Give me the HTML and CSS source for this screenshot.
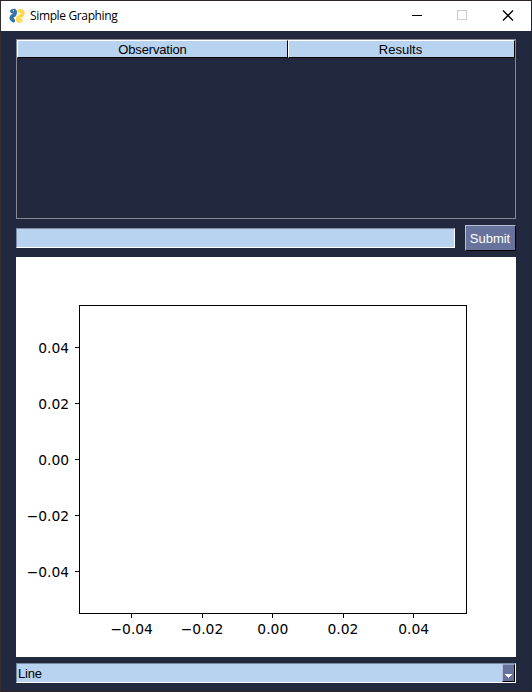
FILE: index.html
```html
<!DOCTYPE html>
<html lang="en">
<head>
<meta charset="utf-8">
<title>Simple Graphing</title>
<link rel="stylesheet" href="styles.css">
</head>
<body>
<div class="window">
  <header class="titlebar">
    <svg class="logo" width="16" height="16" viewBox="0 0 16 16">
      <g fill="none" stroke-width="3.800" stroke-linecap="round" stroke-linejoin="round">
        <path d="M3 3.200Q6.300 1.500 6.100 4.300Q6 6.800 4 7.700Q2 8.900 2.400 10.600L4.200 12.600" stroke="#3673a5"/>
        <path d="M10.300 3Q13.500 2 13.700 5Q13.800 7.400 11.200 8.300Q8.600 9.200 8.900 12Q9.600 13.900 12 12.400" stroke="#ffda4b"/>
      </g>
      <circle cx="4.500" cy="2.700" r=".6" fill="#fff"/>
      <circle cx="11.300" cy="13" r=".6" fill="#fff"/>
    </svg>
    <h1 class="title">Simple Graphing</h1>
    <svg class="controls" width="120" height="30" viewBox="0 0 120 30" shape-rendering="crispEdges">
      <path d="M1 14.500h10" stroke="#000"/>
      <rect x="46.500" y="9.500" width="9" height="9" fill="none" stroke="#ccc"/>
      <path d="M92 9.500l10 10M102 9.500l-10 10" stroke="#000" stroke-width="1.300" shape-rendering="auto"/>
    </svg>
  </header>
  <main class="content">
    <div class="table">
      <div class="head observation">Observation</div>
      <div class="head">Results</div>
    </div>
    <div class="entry-row">
      <input class="entry" type="text" aria-label="Observation">
      <button class="submit">Submit</button>
    </div>
    <svg class="figure" width="500" height="400" viewBox="16 257 500 400">
      <g fill="none" stroke="#000" shape-rendering="crispEdges">
        <rect x="79.500" y="305.500" width="387" height="308"/>
        <path d="M75 347.500h4M75 403.500h4M75 459.500h4M75 515.500h4M75 571.500h4"/>
        <path d="M131.500 614v4M202.500 614v4M272.500 614v4M343.500 614v4M413.500 614v4"/>
      </g>
      <g class="tick" text-anchor="end">
        <text x="69.200" y="353">0.04</text>
        <text x="69.200" y="409">0.02</text>
        <text x="69.200" y="465">0.00</text>
        <text x="69.200" y="521">−0.02</text>
        <text x="69.200" y="577">−0.04</text>
      </g>
      <g class="tick" text-anchor="middle">
        <text x="131.700" y="634">−0.04</text>
        <text x="202" y="634">−0.02</text>
        <text x="272.800" y="634">0.00</text>
        <text x="343" y="634">0.02</text>
        <text x="413.600" y="634">0.04</text>
      </g>
    </svg>
    <div class="combo">
      <span class="value">Line</span>
      <span class="arrow"><svg width="7" height="4" viewBox="0 0 7 4" shape-rendering="crispEdges"><path d="M0 0h7v1H6v1H5v1H4v1H3V3H2V2H1V1H0z" fill="#fff"/></svg></span>
    </div>
  </main>
</div>
</body>
</html>
```
FILE: styles.css
```css
* { box-sizing: border-box; }
body {
  margin: 0;
  width: 532px;
  height: 692px;
  overflow: hidden;
  font-family: "Liberation Sans", Arial, sans-serif;
  font-size: 13px;
}
.window {
  height: 692px;
  border: 1px solid #2b2525;
  border-left-color: #35302f;
  border-right-color: #1b2436;
  background: #22283d;
}
.titlebar {
  display: flex;
  align-items: center;
  height: 30px;
  padding-left: 8px;
  background: #fff;
}
.logo { flex: none; }
.title {
  margin: 0 0 0 5px;
  font: 400 12px/16px "Open Sans", "Noto Sans", sans-serif;
  letter-spacing: -0.36px;
  color: #000;
}
.controls { margin-left: auto; }
.content {
  display: flex;
  flex-direction: column;
  padding: 8px 15px;
}
.table {
  display: flex;
  align-items: flex-start;
  height: 180px;
  border: 1px solid #858894;
}
.head {
  flex: 1;
  height: 18px;
  border: 1px solid #fff;
  border-right-color: #000;
  border-bottom-color: #000;
  background: #b7d3f0;
  color: #000;
  line-height: 18px;
  text-align: center;
}
.head:last-child { padding-right: 2px; }
.observation {
  flex: 0 0 271px;
  letter-spacing: -0.16px;
}
.entry-row {
  display: flex;
  align-items: center;
  gap: 10px;
  height: 26px;
  margin-top: 6px;
}
.entry {
  flex: 1;
  min-width: 0;
  height: 20px;
  padding: 0;
  border: 1px solid #fff;
  border-top-color: #7b8ba4;
  border-left-color: #7b8ba4;
  border-radius: 0;
  outline: 0;
  background: #b7d3f0;
}
.submit {
  width: 51px;
  height: 26px;
  padding: 1px 1px 0 0;
  border: 1px solid #000;
  border-top-color: #b8bdd9;
  border-left-color: #b8bdd9;
  background: #68739d;
  color: #fff;
  font: inherit;
}
.figure {
  display: block;
  margin-top: 6px;
  background: #fff;
}
.tick {
  font-family: "DejaVu Sans", sans-serif;
  font-size: 13.890px;
  fill: #000;
}
.combo {
  display: flex;
  justify-content: space-between;
  height: 20px;
  margin-top: 6px;
  border: 1px solid #fff;
  border-top-color: #7b8ba4;
  border-left-color: #7b8ba4;
  background: #b7d3f0;
}
.value {
  padding-left: 1px;
  line-height: 20px;
  letter-spacing: -0.16px;
  color: #000;
}
.arrow {
  display: flex;
  align-items: flex-end;
  justify-content: center;
  width: 13px;
  padding-bottom: 3px;
  border: 1px solid #000;
  border-top-color: #9ba1c2;
  border-left-color: #b8bdd9;
  background: #68739d;
}
```
